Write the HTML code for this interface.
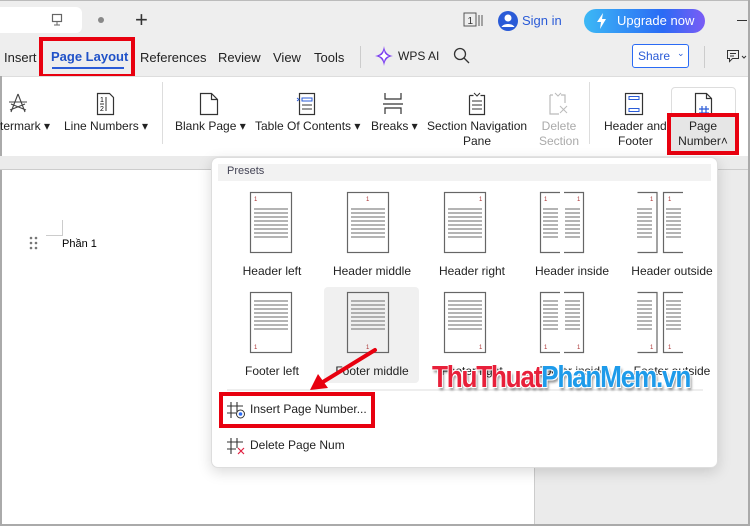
<!DOCTYPE html>
<html><head><meta charset="utf-8">
<style>
*{margin:0;padding:0;box-sizing:border-box}
body{width:750px;height:526px;overflow:hidden;background:#ebebeb;font-family:"Liberation Sans","Noto Sans CJK SC",sans-serif;position:relative;color:#222}
.a{position:absolute}
.t{position:absolute;font-size:12px;white-space:nowrap;color:#222}
.rb{position:absolute;font-size:12px;text-align:center;line-height:15px;color:#222;white-space:nowrap}
.lbl{position:absolute;font-size:12px;color:#222;text-align:center;width:110px}
</style></head><body>
<!-- top bar -->
<div class="a" style="left:0;top:0;width:750px;height:76px;background:#eeeeee;border-right:2px solid #aaa;border-top:1px solid #bbb"></div>
<div class="a" style="left:0;top:7px;width:82px;height:26px;background:#fff;border-radius:0 6px 6px 0"></div>
<svg class="a" style="left:51px;top:13px" width="60" height="16"><rect x="1.5" y="1.5" width="9" height="7" fill="none" stroke="#666" stroke-width="1.2"/><path d="M6 9v3M3 12h6" stroke="#666"/><circle cx="50" cy="7" r="3" fill="#888"/></svg>
<div class="a" style="left:135px;top:8px;font-size:22px;color:#333;line-height:24px">+</div>
<svg class="a" style="left:463px;top:11px" width="22" height="18"><rect x="1" y="2" width="12" height="13" fill="none" stroke="#555"/><text x="4.5" y="13" font-size="10" fill="#333" font-family="Liberation Sans">1</text><path d="M16 4v11M19 4v11" stroke="#555"/></svg>
<svg class="a" style="left:497px;top:10px" width="22" height="22"><circle cx="11" cy="11" r="10" fill="#2a5bd7"/><circle cx="11" cy="8" r="3.5" fill="#fff"/><path d="M4.5 17c2-4 11-4 13 0" fill="#fff"/></svg>
<div class="t" style="left:522px;top:13px;font-size:13px;color:#2a5bd7">Sign in</div>
<div class="a" style="left:584px;top:9px;width:121px;height:24px;border-radius:12px;background:linear-gradient(90deg,#3cb8f5,#2a6bf5 65%,#7b5cf5)"></div>
<svg class="a" style="left:597px;top:13px" width="10" height="16"><path d="M6 0L0 9h4l-1 7 6-10H5z" fill="#fff"/></svg>
<div class="t" style="left:617px;top:13px;font-size:13px;color:#fff">Upgrade now</div>
<div class="a" style="left:737px;top:20px;width:10px;height:1px;background:#333"></div>
<!-- menu -->
<div class="t" style="left:4px;top:50px;font-size:13px">Insert</div>
<div class="t" style="left:51px;top:49px;font-size:13px;font-weight:bold;color:#2052c8">Page Layout</div>
<div class="a" style="left:52px;top:67px;width:72px;height:2px;background:#2a5bd7"></div>
<div class="a" style="left:39px;top:37px;width:96px;height:41px;border:4px solid #e8000f"></div>
<div class="t" style="left:140px;top:50px;font-size:13px">References</div>
<div class="t" style="left:218px;top:50px;font-size:13px">Review</div>
<div class="t" style="left:273px;top:50px;font-size:13px">View</div>
<div class="t" style="left:314px;top:50px;font-size:13px">Tools</div>
<div class="a" style="left:360px;top:46px;width:1px;height:22px;background:#ccc"></div>
<svg class="a" style="left:374px;top:45px" width="20" height="22"><path d="M10 1 Q11 10 19 11 Q11 12 10 21 Q9 12 1 11 Q9 10 10 1z" fill="#7a3cf0"/><path d="M10 5 Q10.5 10 15 11 Q10.5 12 10 17 Q9.5 12 5 11 Q9.5 10 10 5z" fill="#fff"/></svg>
<div class="t" style="left:398px;top:49px;font-size:12px">WPS AI</div>
<svg class="a" style="left:453px;top:47px" width="18" height="18"><circle cx="7" cy="7" r="5.5" fill="none" stroke="#333" stroke-width="1.3"/><path d="M11 11l5 5" stroke="#333" stroke-width="1.3"/></svg>
<div class="a" style="left:632px;top:44px;width:57px;height:24px;border:1px solid #2a6bf5;border-radius:3px;background:#fff"></div>
<div class="t" style="left:638px;top:49px;font-size:12px;color:#2a5bd7">Share</div>
<div class="t" style="left:677px;top:48px;font-size:9px;color:#2a5bd7">⌄</div>
<div class="a" style="left:704px;top:46px;width:1px;height:22px;background:#ccc"></div>
<svg class="a" style="left:726px;top:49px" width="24" height="16"><path d="M1.5 1.5h11v8h-6l-3 3v-3h-2z" fill="none" stroke="#333"/><path d="M4 4.5h6M4 7h4" stroke="#333"/><path d="M16 7l2 2 2-2" stroke="#333" fill="none"/></svg>
<!-- ribbon -->
<div class="a" style="left:0;top:76px;width:748px;height:80px;background:#fff;border-top:1px solid #ddd"></div>
<div class="a" style="left:162px;top:82px;width:1px;height:62px;background:#ddd"></div>
<div class="a" style="left:589px;top:82px;width:1px;height:62px;background:#ddd"></div>
<div class="a" style="left:0;top:76px;width:2px;height:80px;background:#aaa"></div>
<svg class="a" style="left:6px;top:92px" width="24" height="24"><path d="M12 2L5 20M12 2l7 18M3 10h18M4 18l15-6M20 18L5 12" stroke="#444" fill="none" stroke-width="1.1"/></svg>
<div class="rb" style="left:0;top:119px">termark ▾</div>
<svg class="a" style="left:96px;top:92px" width="20" height="24"><path d="M1.5 1.5h12l4 4v17h-16z" fill="none" stroke="#333" stroke-width="1.2"/><text x="4" y="10" font-size="7" font-family="Liberation Sans">1</text><text x="4" y="19" font-size="7" font-family="Liberation Sans">2</text><path d="M4 12h4M10 5v14" stroke="#333"/></svg>
<div class="rb" style="left:64px;top:119px">Line Numbers ▾</div>
<svg class="a" style="left:199px;top:92px" width="20" height="24"><path d="M1.5 1.5h11l6 6v15h-17z M12.5 1.5v6h6" fill="none" stroke="#333" stroke-width="1.2"/></svg>
<div class="rb" style="left:175px;top:119px">Blank Page ▾</div>
<svg class="a" style="left:296px;top:92px" width="22" height="24"><rect x="3.5" y="1.5" width="15" height="21" fill="none" stroke="#333" stroke-width="1.2"/><rect x="6" y="6" width="10" height="3" fill="none" stroke="#2a5bd7"/><path d="M1 6l2 1.5-2 1.5" stroke="#2a5bd7" fill="none"/><path d="M6 13h10M6 17h10" stroke="#333"/></svg>
<div class="rb" style="left:255px;top:119px">Table Of Contents ▾</div>
<svg class="a" style="left:382px;top:92px" width="22" height="24"><path d="M3 1v6h16V1M1 12h20M3 22v-6h16v6" stroke="#333" fill="none" stroke-width="1.2"/></svg>
<div class="rb" style="left:371px;top:119px">Breaks ▾</div>
<svg class="a" style="left:466px;top:92px" width="22" height="24"><path d="M3.5 3.5h4M14.5 3.5h4v19h-15v-19" fill="none" stroke="#333" stroke-width="1.2"/><path d="M8 1l3 3 3-3M6 9h10M6 13h10M6 17h10" stroke="#333" fill="none"/></svg>
<div class="rb" style="left:427px;top:119px;width:100px">Section Navigation<br>Pane</div>
<svg class="a" style="left:547px;top:92px" width="22" height="24"><path d="M3 3h3M14 3h4v8M3 3v19h9" fill="none" stroke="#bbb" stroke-width="1.2"/><path d="M8 1l3 3 3-3M13 14l7 7M20 14l-7 7" stroke="#bbb" fill="none"/></svg>
<div class="rb" style="left:539px;top:119px;color:#aaa">Delete<br>Section</div>
<svg class="a" style="left:624px;top:92px" width="20" height="24"><rect x="1.5" y="1.5" width="17" height="21" fill="none" stroke="#333" stroke-width="1.2"/><rect x="5" y="4.5" width="10" height="3" fill="none" stroke="#2a5bd7"/><rect x="5" y="16.5" width="10" height="3" fill="none" stroke="#2a5bd7"/></svg>
<div class="rb" style="left:604px;top:119px">Header and<br>Footer</div>
<div class="a" style="left:671px;top:87px;width:65px;height:66px;border:1px solid #ddd;border-radius:4px;background:#fff"></div>
<svg class="a" style="left:694px;top:92px" width="20" height="26"><path d="M1.5 1.5h11l5 5v16h-16z M12.5 1.5v5h5" fill="none" stroke="#333" stroke-width="1.2"/><path d="M8 14v10M12 14v10M5 17h10M5 21h10" stroke="#2a5bd7" stroke-width="1.2"/></svg>
<div class="a" style="left:667px;top:113px;width:72px;height:42px;border:4px solid #e8000f;background:#e6e6e6"></div>
<div class="rb" style="left:672px;top:119px;width:62px">Page<br>Number˄</div>
<!-- document -->
<div class="a" style="left:0;top:156px;width:748px;height:14px;background:#ebebeb;border-bottom:1px solid #ccc"></div>
<div class="a" style="left:0;top:170px;width:535px;height:356px;background:#fff;border-left:2px solid #aaa;border-right:1px solid #ccc"></div>
<div class="a" style="left:46px;top:220px;width:17px;height:16px;border-right:1px solid #ccc;border-bottom:1px solid #ccc"></div>
<svg class="a" style="left:29px;top:236px" width="10" height="14"><g fill="#777"><circle cx="2" cy="2" r="1.3"/><circle cx="7" cy="2" r="1.3"/><circle cx="2" cy="7" r="1.3"/><circle cx="7" cy="7" r="1.3"/><circle cx="2" cy="12" r="1.3"/><circle cx="7" cy="12" r="1.3"/></g></svg>
<div class="t" style="left:62px;top:238px;font-size:11px;color:#000">Phần 1</div>
<div class="a" style="left:0;top:524px;width:750px;height:2px;background:#aaa"></div>
<div class="a" style="left:748px;top:0;width:2px;height:526px;background:#aaa"></div>
<!-- dropdown -->
<div class="a" style="left:211px;top:157px;width:507px;height:311px;background:#fff;border:1px solid #ddd;border-radius:7px;box-shadow:0 4px 14px rgba(0,0,0,.15)"></div>
<div class="a" style="left:218px;top:164px;width:493px;height:17px;background:#f2f2f2"></div>
<div class="t" style="left:227px;top:165px;font-size:11px;color:#445">Presets</div>
<div class="a" style="left:324px;top:287px;width:95px;height:96px;background:#f0f0f0;border-radius:4px"></div>
<svg class="a" style="left:211px;top:157px" width="507" height="311">
<defs>
<g id="L"><path d="M0 0h34M0 4h34M0 8h34M0 12h34M0 16h34M0 20h34M0 24h34M0 28h34" stroke="#888" stroke-width="1.3"/></g>
<g id="l"><path d="M0 0h15M0 4h15M0 8h15M0 12h15M0 16h15M0 20h15M0 24h15M0 28h15" stroke="#888" stroke-width="1.3"/></g>
</defs>
<g fill="none" stroke="#666" stroke-width="1.2" font-family="Liberation Sans" font-size="6">
<rect x="39.5" y="35.5" width="41" height="60"/><use href="#L" x="43" y="52"/><text x="43" y="44" fill="#a33" stroke="none">1</text>
<rect x="136.5" y="35.5" width="41" height="60"/><use href="#L" x="140" y="52"/><text x="155" y="44" fill="#a33" stroke="none">1</text>
<rect x="233.5" y="35.5" width="41" height="60"/><use href="#L" x="237" y="52"/><text x="268" y="44" fill="#a33" stroke="none">1</text>
<path d="M349 35.5h-19.5v60h19.5M353 35.5h19.5v60H353"/><use href="#l" x="332" y="52"/><use href="#l" x="354" y="52"/><text x="333" y="44" fill="#a33" stroke="none">1</text><text x="366" y="44" fill="#a33" stroke="none">1</text>
<path d="M426.5 35.5h19.5v60h-19.5M472 35.5h-19.5v60H472"/><use href="#l" x="426" y="52"/><use href="#l" x="455" y="52"/><text x="439" y="44" fill="#a33" stroke="none">1</text><text x="457" y="44" fill="#a33" stroke="none">1</text>
<rect x="39.5" y="135.5" width="41" height="60"/><use href="#L" x="43" y="144"/><text x="43" y="192" fill="#a33" stroke="none">1</text>
<rect x="136.5" y="135.5" width="41" height="60"/><use href="#L" x="140" y="144"/><text x="155" y="192" fill="#a33" stroke="none">1</text>
<rect x="233.5" y="135.5" width="41" height="60"/><use href="#L" x="237" y="144"/><text x="268" y="192" fill="#a33" stroke="none">1</text>
<path d="M349 135.5h-19.5v60h19.5M353 135.5h19.5v60H353"/><use href="#l" x="332" y="144"/><use href="#l" x="354" y="144"/><text x="333" y="192" fill="#a33" stroke="none">1</text><text x="366" y="192" fill="#a33" stroke="none">1</text>
<path d="M426.5 135.5h19.5v60h-19.5M472 135.5h-19.5v60H472"/><use href="#l" x="426" y="144"/><use href="#l" x="455" y="144"/><text x="439" y="192" fill="#a33" stroke="none">1</text><text x="457" y="192" fill="#a33" stroke="none">1</text>
</g>
<path d="M16 233h476" stroke="#ddd"/>
</svg>
<div class="lbl" style="left:217px;top:264px">Header left</div>
<div class="lbl" style="left:317px;top:264px">Header middle</div>
<div class="lbl" style="left:417px;top:264px">Header right</div>
<div class="lbl" style="left:517px;top:264px">Header inside</div>
<div class="lbl" style="left:617px;top:264px">Header outside</div>
<div class="lbl" style="left:217px;top:364px">Footer left</div>
<div class="lbl" style="left:317px;top:364px">Footer middle</div>
<div class="lbl" style="left:417px;top:364px">Footer right</div>
<div class="lbl" style="left:517px;top:364px">Footer inside</div>
<div class="lbl" style="left:617px;top:364px">Footer outside</div>
<div class="a" style="left:219px;top:392px;width:156px;height:36px;border:4px solid #e8000f"></div>
<svg class="a" style="left:226px;top:401px" width="20" height="18"><path d="M5 1v16M11 1v10M1 5h16M1 12h9" stroke="#333" stroke-width="1.1"/><circle cx="14.5" cy="13" r="4" fill="#fff" stroke="#333"/><circle cx="14.5" cy="13" r="1.8" fill="#2a6bf5"/></svg>
<div class="t" style="left:250px;top:402px;font-size:12px">Insert Page Number...</div>
<svg class="a" style="left:226px;top:437px" width="20" height="18"><path d="M5 1v16M11 1v10M1 5h16M1 12h9" stroke="#333" stroke-width="1.1"/><path d="M12 11l6 6M18 11l-6 6" stroke="#e02040" stroke-width="1.2"/></svg>
<div class="t" style="left:250px;top:438px;font-size:12px">Delete Page Num</div>
<!-- arrow -->
<svg class="a" style="left:300px;top:340px" width="90" height="60"><path d="M75 10L18 45" stroke="#e8000f" stroke-width="4" stroke-linecap="round"/><path d="M10 50l8-16 10 14z" fill="#e8000f"/></svg>
<!-- watermark -->
<div class="t" style="left:432px;top:359px;font-size:31px;font-weight:bold;letter-spacing:-1.5px;transform:scaleX(0.845);transform-origin:left;text-shadow:-1px -1px 0 #fff,1px -1px 0 #fff,-1px 1px 0 #fff,1px 1px 0 #fff,2px 3px 3px rgba(0,0,0,.45)"><span style="color:#e8203a">ThuThuat</span><span style="color:#1e9bea">PhanMem.vn</span></div>
</body></html>
